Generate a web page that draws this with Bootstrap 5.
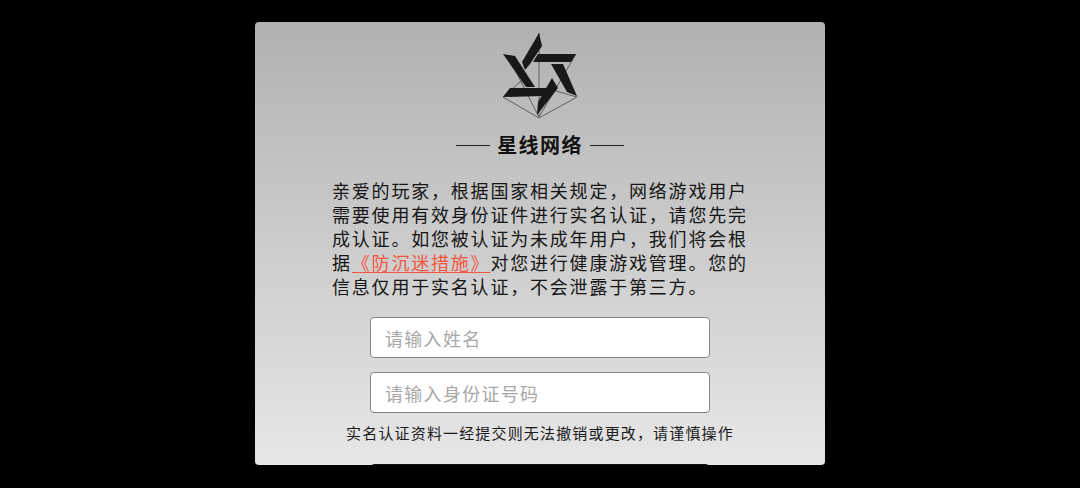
<!DOCTYPE html>
<html lang="zh-CN">
<head>
<meta charset="utf-8">
<title>实名认证</title>
<link href="https://cdn.jsdelivr.net/npm/bootstrap@5.3.0/dist/css/bootstrap.min.css" rel="stylesheet">
<style>
html, body { height: 488px; overflow: hidden; background: #000; }
body { font-family: "Noto Sans CJK SC", "Liberation Sans", sans-serif; color: #111; padding-top: 22px; }
.auth-panel { width: 570px; height: 443px; border-radius: 4px; overflow: hidden; background: linear-gradient(180deg, #b1b1b1 0%, #e7e7e7 100%); padding-top: 10px; }
.logo-mark { display: block; width: 80px; height: 90px; }
.brand-row { height: 26px; margin-top: 10px; gap: 7px; font-size: 20px; font-weight: 700; letter-spacing: 1.4px; line-height: 26px; color: #111; }
.brand-rule { width: 34px; height: 1px; background: #222; }
.intro-text { width: 417px; margin: 20px 0 0 77px; font-size: 18px; line-height: 24px; letter-spacing: 1.8px; color: #151515; }
.intro-text a { color: #f4553f; text-decoration: underline; text-underline-offset: 2px; }
.field-stack { width: 340px; gap: 14px; margin-top: 19px; }
.auth-input.form-control { height: 41px; padding: 0 14px; border: 1px solid #858585; border-radius: 4px; background: #fff; font-size: 18px; letter-spacing: 1.3px; box-shadow: none; }
.auth-input.form-control::placeholder { color: #a8a8a8; opacity: 1; }
.notice-text { margin-top: 9px; font-size: 15px; line-height: 22px; letter-spacing: 1.16px; color: #1a1a1a; white-space: nowrap; }
.submit-btn.btn { display: block; width: 336px; height: 40px; margin-top: 20px; border: 0; border-radius: 2px; background: #111; }
</style>
</head>
<body>
<main class="auth-panel mx-auto">
  <div class="d-flex justify-content-center">
    <svg class="logo-mark" viewBox="500 32 80 90" aria-label="星线网络">
      <g fill="none" stroke="#5f5f5f" stroke-width="1">
        <path d="M539 33V117"/>
        <path d="M503 97L539 118L577 97"/>
        <path d="M503 97L527 76"/>
        <path d="M576 54L539 117"/>
        <path d="M516 72L539 117"/>
        <path d="M545 88L577 97"/>
      </g>
      <g fill="#191919">
        <path d="M539 33L542 46L530 64L525 70L522 62Z"/>
        <path d="M503 54L515 56L535 87H526Z"/>
        <path d="M503 97L510 88H548L543 96Z"/>
        <path d="M537 115L538 102L552 78L558 88Z"/>
        <path d="M551 64H563L577 96L567 92Z"/>
        <path d="M533 62L538 54H576L571 62Z"/>
      </g>
    </svg>
  </div>
  <div class="brand-row d-flex justify-content-center align-items-center">
    <span class="brand-rule"></span><span>星线网络</span><span class="brand-rule"></span>
  </div>
  <p class="intro-text">亲爱的玩家，根据国家相关规定，网络游戏用户需要使用有效身份证件进行实名认证，请您先完成认证。如您被认证为未成年用户，我们将会根据<a href="#">《防沉迷措施》</a>对您进行健康游戏管理。您的信息仅用于实名认证，不会泄露于第三方。</p>
  <form>
    <div class="field-stack d-flex flex-column mx-auto">
      <input class="auth-input form-control" type="text" placeholder="请输入姓名">
      <input class="auth-input form-control" type="text" placeholder="请输入身份证号码">
    </div>
    <div class="notice-text text-center">实名认证资料一经提交则无法撤销或更改，请谨慎操作</div>
    <button class="submit-btn btn mx-auto" type="button" aria-label="提交"></button>
  </form>
</main>
<script src="https://cdn.jsdelivr.net/npm/bootstrap@5.3.0/dist/js/bootstrap.bundle.min.js"></script>
</body>
</html>
